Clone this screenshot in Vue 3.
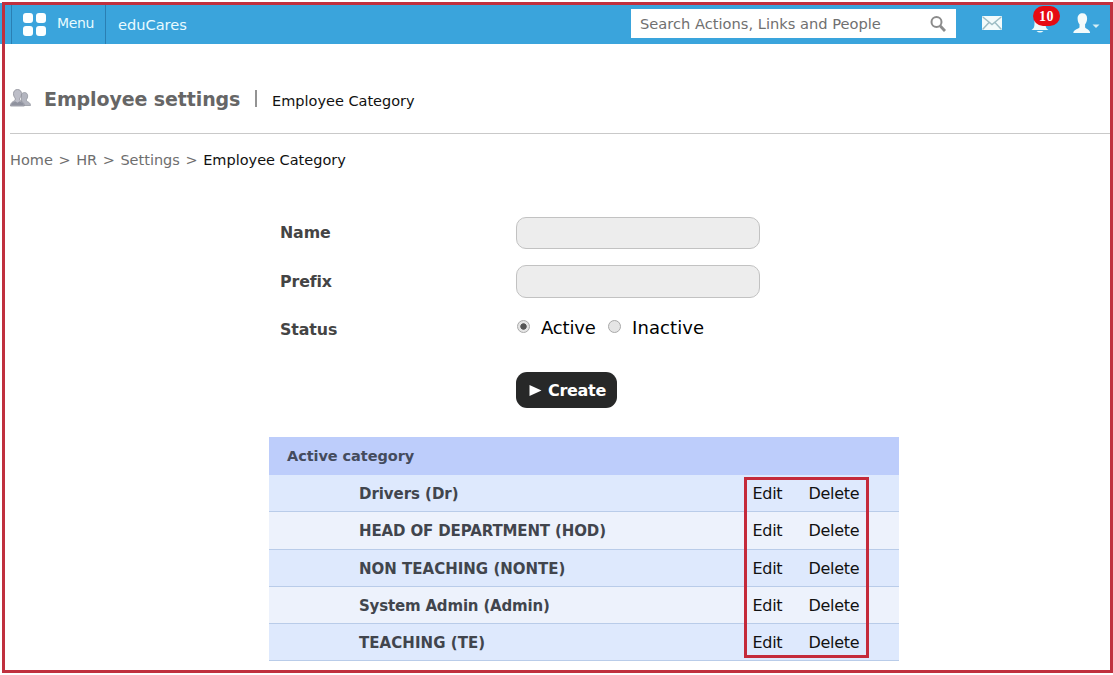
<script setup>
import { ref } from 'vue'

const status = ref('active')
const categories = [
  { name: 'Drivers (Dr)', key: 'dr' },
  { name: 'HEAD OF DEPARTMENT (HOD)', key: 'hod' },
  { name: 'NON TEACHING (NONTE)', key: 'nonte' },
  { name: 'System Admin (Admin)', key: 'admin' },
  { name: 'TEACHING (TE)', key: 'te' },
]
</script>

<template>
  <div class="page">
    <header class="topbar">
      <a class="menu">
        <span class="tiles"><i></i><i></i><i></i><i></i></span>
        <span class="menu-label">Menu</span>
      </a>
      <a class="brand">eduCares</a>
      <div class="search">
        <span class="search-text">Search Actions, Links and People</span>
        <svg class="lens" width="18" height="18" viewBox="0 0 18 18">
          <circle cx="6.500" cy="7" r="5" fill="none" stroke="#8b8b8b" stroke-width="2" />
          <path d="M10.300 11l4.700 5" stroke="#8b8b8b" stroke-width="2.8" />
        </svg>
      </div>
      <svg class="mail" width="20" height="14" viewBox="0 0 20 14">
        <rect width="20" height="14" rx="1" fill="#f3fbfb" />
        <path d="M0.8 1l9.2 7.6L19.2 1M0.8 13.2L7 6.5M19.2 13.2L13 6.5" fill="none" stroke="#9dbdc4" stroke-width="1.5" />
      </svg>
      <div class="alerts">
        <svg width="18" height="21" viewBox="0 0 18 21">
          <path d="M0.500 18c3-2 3-4 3-8 0-4 2-7 5.500-7s5.500 3 5.500 7c0 4 0 6 3 8z" fill="#eefafa" />
          <path d="M5.500 19h7q-3.500 3-7 0z" fill="#eefafa" />
        </svg>
        <span class="badge">10</span>
      </div>
      <svg class="user" width="27" height="21" viewBox="0 0 27 21">
        <path d="M9.500 0.300c3 0 4.600 2 4.600 5.200 0 2.500-.8 4.500-2 5.800v2.900c0 1.500 5 2 5 5.800H0.300c0-3.800 6.200-4.300 6.200-5.800v-2.900c-1.200-1.300-1.900-3.300-1.900-5.800C4.600 2.300 6.500 0.300 9.500 0.300z" fill="#f3fbfb" />
        <path d="M19.500 11.500h7l-3.500 3.600z" fill="#d5eef4" />
      </svg>
    </header>

    <div class="heading">
      <svg class="people" width="21" height="18" viewBox="0 0 21 18">
        <path d="M14.500 3.500c2 0 3.200 1.500 3.200 3.500 0 1.500-.5 2.700-1.200 3.400v1.300c0 1 4 1.200 4 4.800h-9V5.500c.5-1.200 1.500-2 3-2z" fill="#b3b5bf" stroke="#8d9099" stroke-width=".7" />
        <path d="M7.500.5c2.500 0 4 1.700 4 4.200 0 1.900-.7 3.500-1.700 4.400v1.700c0 1.500 4.500 1.600 4.500 6.200H.5c0-4.600 4.700-4.700 4.700-6.200V9.100c-1-.9-1.700-2.500-1.700-4.400C3.500 2.200 5 .5 7.500.5z" fill="#bdbec8" stroke="#8b8d97" stroke-width=".8" />
        <path d="M1 16.500c.3-2.700 2.300-3.500 4.200-4.300l2.300 1.500 2.200-1.500c2 .8 4 1.600 4.200 4.300z" fill="#8f929e" />
      </svg>
      <h1>Employee settings</h1>
      <span class="divider"></span>
      <span class="subtitle">Employee Category</span>
    </div>

    <nav class="crumbs">
      <a>Home</a><b>&gt;</b><a>HR</a><b>&gt;</b><a>Settings</a><b>&gt;</b><strong>Employee Category</strong>
    </nav>

    <form class="form" @submit.prevent>
      <label for="name">Name</label>
      <input id="name" class="field" type="text" />
      <label for="prefix">Prefix</label>
      <input id="prefix" class="field" type="text" />
      <label>Status</label>
      <div class="radios">
        <span class="radio" :class="{ on: status === 'active' }" @click="status = 'active'"></span>
        <span class="active-text">Active</span>
        <span class="radio" :class="{ on: status === 'inactive' }" @click="status = 'inactive'"></span>
        <span class="inactive-text">Inactive</span>
      </div>
      <button class="create" type="submit">
        <svg width="13" height="11" viewBox="0 0 13 11"><path d="M0.500 0L12.500 5.500L0.500 11z" fill="#fff" /></svg>
        <span>Create</span>
      </button>
    </form>

    <section class="table">
      <div class="thead">Active category</div>
      <div v-for="c in categories" :key="c.key" class="row">
        <span class="cat" :class="c.key">{{ c.name }}</span>
        <a class="edit">Edit</a>
        <a class="delete">Delete</a>
      </div>
      <div class="actions-outline"></div>
    </section>
    <div class="page-outline"></div>
  </div>
</template>

<style>
body {
  margin: 0;
  background: #fff;
}
</style>

<style scoped>
.page {
  position: relative;
  box-sizing: border-box;
  width: 1113px;
  height: 675px;
  padding-top: 3px;
  overflow: hidden;
  background: #fff;
  font-family: "DejaVu Sans", Verdana, sans-serif;
  color: #111;
}
.topbar {
  display: flex;
  box-sizing: border-box;
  height: 41px;
  background: #3aa4dc;
  color: #e8fbff;
}
.menu {
  display: flex;
  box-sizing: border-box;
  width: 95px;
  margin-left: 11px;
  padding-left: 11px;
  border-left: 1px solid #2a7fb3;
  border-right: 1px solid #2a7fb3;
}
.tiles {
  display: grid;
  grid-template-columns: 10px 10px;
  grid-template-rows: 10px 10px;
  gap: 3px;
  margin-top: 10px;
}
.tiles i {
  border-radius: 3px;
  background: #fcffff;
}
.menu-label {
  margin-left: 11px;
  font-size: 14px;
  letter-spacing: -0.35px;
  line-height: 40px;
}
.brand {
  width: 513px;
  padding-left: 12px;
  font-size: 14.6px;
  line-height: 43px;
}
.search {
  display: flex;
  box-sizing: border-box;
  align-items: center;
  width: 325px;
  height: 29px;
  margin-top: 6px;
  padding-left: 9px;
  background: #fff;
  color: #707070;
}
.search-text {
  width: 290px;
  font-size: 14.65px;
  white-space: nowrap;
}
.mail {
  margin: 13px 0 0 26px;
}
.alerts {
  position: relative;
  width: 18px;
  margin: 9px 0 0 29px;
}
.badge {
  position: absolute;
  top: -6px;
  left: 2px;
  width: 27px;
  height: 20px;
  border-radius: 10px;
  background: #e60a12;
  color: #fff;
  font-family: "Liberation Serif", serif;
  font-size: 14px;
  font-weight: bold;
  letter-spacing: 0.5px;
  line-height: 21px;
  text-align: center;
}
.user {
  margin: 10px 0 0 24px;
}
.heading {
  display: flex;
  box-sizing: border-box;
  height: 90px;
  margin-left: 10px;
  padding-top: 44px;
  border-bottom: 1px solid #c9c9c9;
}
.people {
  margin-top: 1px;
}
h1 {
  width: 211px;
  margin: 0 0 0 13px;
  color: #666;
  font-size: 19px;
  font-weight: bold;
  letter-spacing: -0.1px;
  line-height: 23px;
  white-space: nowrap;
}
.divider {
  width: 2px;
  height: 17px;
  margin-top: 2px;
  background: #939393;
}
.subtitle {
  margin-left: 15px;
  font-size: 14.5px;
  line-height: 26px;
}
.crumbs {
  display: flex;
  margin: 17px 0 0 10px;
  color: #6e6e6e;
  font-size: 14.5px;
  line-height: 18px;
}
.crumbs b {
  width: 23.300px;
  font-weight: normal;
  text-align: center;
}
.crumbs strong {
  color: #111;
  font-weight: normal;
}
.form {
  display: grid;
  grid-template-columns: 236px 244px;
  grid-template-rows: 48px 49px 58px 36px;
  justify-content: start;
  margin: 48px 0 0 280px;
}
.form label {
  color: #444;
  font-size: 15.8px;
  font-weight: bold;
  letter-spacing: -0.1px;
  line-height: 32px;
}
.field {
  box-sizing: border-box;
  width: 244px;
  height: 32px;
  border: 1px solid #c2c2c2;
  border-radius: 10px;
  background: #ededed;
  outline: none;
}
#prefix {
  height: 33px;
}
label[for="prefix"] {
  line-height: 34px;
}
.radios {
  display: flex;
  height: 28px;
  color: #000;
  font-size: 18px;
  line-height: 27px;
}
.radio {
  box-sizing: border-box;
  width: 13px;
  height: 13px;
  margin: 6px 0 0 1px;
  border: 1px solid #a9a9a9;
  border-radius: 50%;
  background: #e5e5e5;
}
.radio.on {
  background: radial-gradient(circle, #555 0 2.800px, #e5e5e5 3.600px);
}
.active-text {
  width: 66px;
  margin-left: 11px;
  letter-spacing: -0.15px;
}
.inactive-text {
  margin-left: 11px;
  letter-spacing: 0.1px;
}
.create {
  grid-column: 2;
  display: flex;
  align-items: center;
  gap: 6px;
  width: 101px;
  height: 36px;
  padding: 0 0 0 13px;
  border: 0;
  border-radius: 11px;
  background: #272828;
  color: #fff;
  font: bold 16px "DejaVu Sans", Verdana, sans-serif;
  letter-spacing: -0.3px;
}
.table {
  position: relative;
  width: 630px;
  margin: 29px 0 0 269px;
}
.thead {
  box-sizing: border-box;
  height: 38px;
  padding-left: 18px;
  background: #bdcdfb;
  color: #444b5d;
  font-size: 14.5px;
  font-weight: bold;
  letter-spacing: -0.07px;
  line-height: 38px;
}
.row {
  display: grid;
  box-sizing: border-box;
  grid-template-columns: 393.500px 56px 1fr;
  height: 37px;
  padding-left: 90px;
  border-bottom: 1px solid #b9cce9;
  background: #dee9fd;
  line-height: 38px;
}
.row:nth-child(odd) {
  background: #edf2fc;
}
.row:nth-child(3) {
  height: 38px;
}
.cat {
  color: #41454d;
  font-size: 15px;
  font-weight: bold;
}
.cat.dr {
  letter-spacing: -0.05px;
}
.cat.hod {
  letter-spacing: -0.13px;
}
.cat.admin {
  letter-spacing: -0.18px;
}
.cat.te {
  letter-spacing: 0.06px;
}
.edit,
.delete {
  font-size: 16px;
  letter-spacing: -0.3px;
}
.actions-outline {
  position: absolute;
  top: 40px;
  left: 475px;
  box-sizing: border-box;
  width: 125px;
  height: 181px;
  border: 3px solid #c42a3a;
}
.page-outline {
  position: absolute;
  top: 2px;
  left: 2px;
  box-sizing: border-box;
  width: 1111px;
  height: 671px;
  border: 3px solid #c0303e;
  pointer-events: none;
}
</style>
